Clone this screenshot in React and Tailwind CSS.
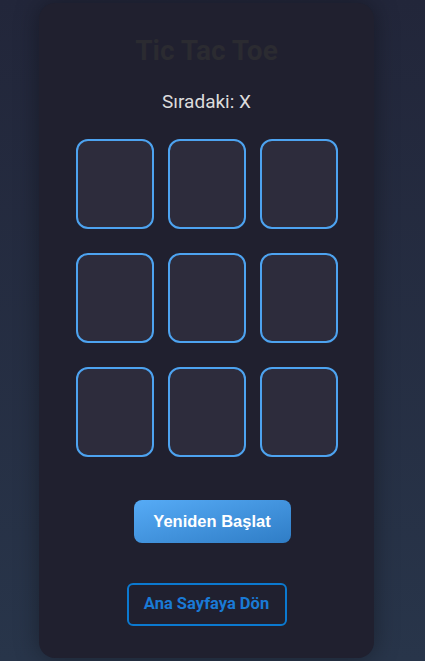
export default function App() {
  const cells = Array(9).fill(null);

  return (
    <div className="min-h-[661px] bg-gradient-to-b from-[#22263a] to-[#28354a] flex justify-center pr-[12px] pt-[3px] pb-[3px] font-['Roboto',sans-serif]">
      <div className="w-[335px] h-[655px] bg-[#20202f] rounded-2xl shadow-[0_0_24px_rgba(0,0,0,0.35)] flex flex-col items-center">
        <h1 className="mt-[32px] text-[28px] leading-[32px] font-bold text-[#2b2b31]">Tic Tac Toe</h1>
        <p className="mt-[24px] text-[19px] leading-[22px] text-[#dcdcdc]">Sıradaki: X</p>

        <div className="mt-[26px] grid grid-cols-[repeat(3,78px)] gap-x-[14px] gap-y-[24px]">
          {cells.map((c, i) => (
            <button
              key={i}
              className="w-[78px] h-[90px] rounded-xl border-2 border-[#4da3f0] bg-[#2d2c3c]"
            >
              {c}
            </button>
          ))}
        </div>

        <button className="mt-[43px] ml-[11px] w-[157px] h-[43px] rounded-lg bg-gradient-to-br from-[#56abf6] to-[#2f7dc6] text-white font-bold text-[16.5px] font-['Liberation_Sans',sans-serif]">
          Yeniden Başlat
        </button>

        <button className="mt-[40px] w-[160px] h-[43px] rounded-md border-2 border-[#0b79d0] text-[#1a7ad6] font-bold text-[16.5px]">
          Ana Sayfaya Dön
        </button>
      </div>
    </div>
  );
}
